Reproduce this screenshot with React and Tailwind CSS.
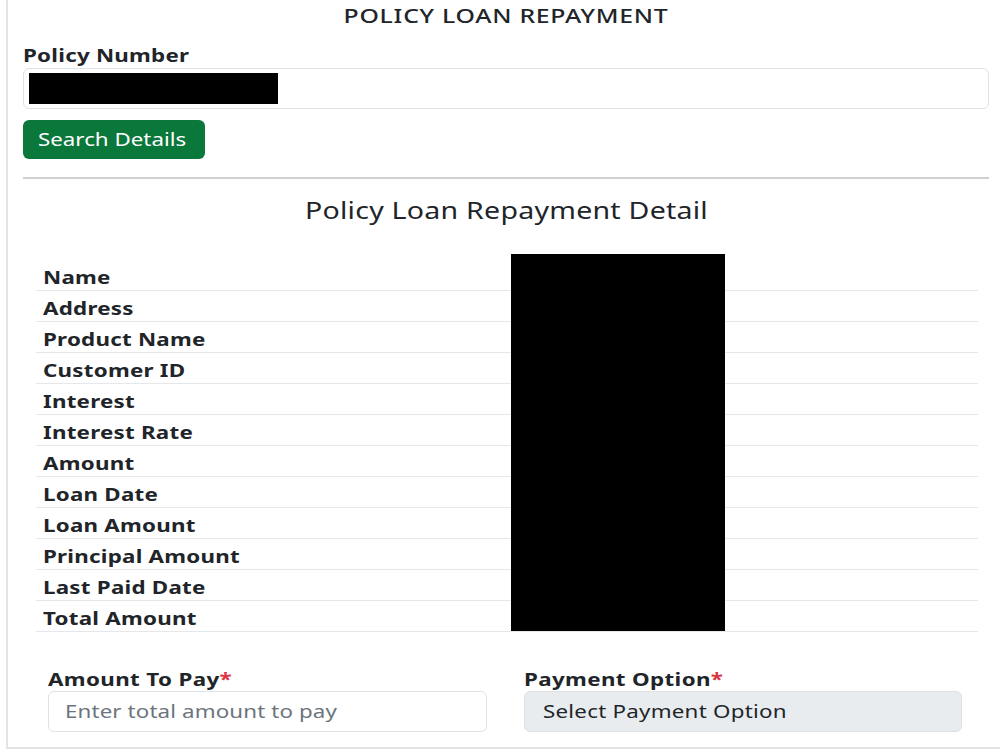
import React from "react";

const rows = [
  "Name",
  "Address",
  "Product Name",
  "Customer ID",
  "Interest",
  "Interest Rate",
  "Amount",
  "Loan Date",
  "Loan Amount",
  "Principal Amount",
  "Last Paid Date",
  "Total Amount",
];

function W({ children, center }) {
  return (
    <span
      className={
        center
          ? "inline-block origin-center scale-x-[1.24] whitespace-nowrap"
          : "inline-block origin-left scale-x-[1.24] whitespace-nowrap"
      }
    >
      {children}
    </span>
  );
}

export default function App() {
  return (
    <div
      className="w-[1000px] h-[750px] overflow-hidden bg-white text-[#212529]"
      style={{ fontFamily: '"Noto Sans", "Open Sans", sans-serif' }}
    >
      <div className="ml-[6px] w-[1010px] h-[749px] border-l-2 border-b-2 border-[#e3e3e3] pl-[15px] pr-[32px]">
        <h1 className="w-[966px] text-center text-[20px] leading-[32px] font-medium tracking-[0.6px]">
          <W center>POLICY LOAN REPAYMENT</W>
        </h1>
        <div className="mt-[11px]">
          <label className="block text-[18px] font-bold leading-[24px] tracking-[0.2px]">
            <W>Policy Number</W>
          </label>
          <div className="mt-[1px] h-[41px] w-[966px] rounded-[6px] border border-[#dee2e6] flex items-center px-[5px]">
            <div className="w-[249px] h-[31px] bg-black"></div>
          </div>
          <button className="mt-[11px] h-[39px] w-[182px] rounded-[6px] bg-[#0a773b] text-white text-[18px] leading-[39px] text-left pl-[15px]">
            <W>Search Details</W>
          </button>
        </div>
        <div className="mt-[18px] w-[966px] border-t-2 border-[#d0d0d0]"></div>
        <h2 className="text-center text-[23px] leading-[36px] mt-[13px] w-[966px] tracking-[0.2px]">
          <W center>Policy Loan Repayment Detail</W>
        </h2>
        <div className="relative ml-[13px] mt-[32px] w-[942px]">
          <div className="absolute left-[475px] top-[-6px] w-[214px] h-[377px] bg-black"></div>
          {rows.map((r) => (
            <div
              key={r}
              className="h-[31px] border-b border-[#e5e8eb] pl-[7px] pt-[4px] flex items-center text-[18px] font-bold tracking-[0.2px]"
            >
              <W>{r}</W>
            </div>
          ))}
        </div>
        <div className="mt-[35px] flex gap-[37px] pl-[25px]">
          <div className="w-[439px]">
            <label className="block text-[18px] font-bold leading-[24px] tracking-[0.3px]">
              <W>
                Amount To Pay<span className="text-[#dc3545]">*</span>
              </W>
            </label>
            <div className="h-[41px] rounded-[6px] border border-[#dee2e6] flex items-center px-[16px] text-[18px] text-[#6c757d] tracking-[0.1px]">
              <W>Enter total amount to pay</W>
            </div>
          </div>
          <div className="w-[438px]">
            <label className="block text-[18px] font-bold leading-[24px] tracking-[0.3px]">
              <W>
                Payment Option<span className="text-[#dc3545]">*</span>
              </W>
            </label>
            <div className="h-[41px] rounded-[6px] border border-[#dee2e6] bg-[#e9ecef] flex items-center px-[18px] text-[18px] tracking-[0.2px]">
              <W>Select Payment Option</W>
            </div>
          </div>
        </div>
      </div>
    </div>
  );
}
